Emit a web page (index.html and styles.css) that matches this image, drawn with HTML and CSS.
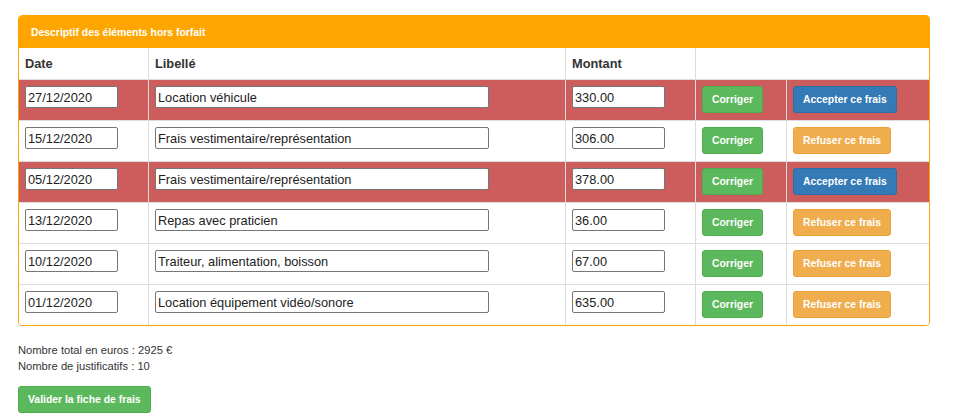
FILE: index.html
```html
<!DOCTYPE html>
<html lang="fr">
<head>
<meta charset="utf-8">
<title>Fiche de frais</title>
<link rel="stylesheet" href="styles.css">
</head>
<body>
<div class="panel">
  <div class="panel-heading">Descriptif des éléments hors forfait</div>
  <div class="grid">
    <div class="row head">
      <div class="cell">Date</div>
      <div class="cell">Libellé</div>
      <div class="cell">Montant</div>
      <div class="cell span2"></div>
    </div>
    <div class="row danger">
      <div class="cell"><input class="in-date" value="27/12/2020"></div>
      <div class="cell"><input class="in-lib" value="Location véhicule"></div>
      <div class="cell"><input class="in-mnt" value="330.00"></div>
      <div class="cell"><button class="btn success">Corriger</button></div>
      <div class="cell"><button class="btn primary">Accepter ce frais</button></div>
    </div>
    <div class="row">
      <div class="cell"><input class="in-date" value="15/12/2020"></div>
      <div class="cell"><input class="in-lib" value="Frais vestimentaire/représentation"></div>
      <div class="cell"><input class="in-mnt" value="306.00"></div>
      <div class="cell"><button class="btn success">Corriger</button></div>
      <div class="cell"><button class="btn warning">Refuser ce frais</button></div>
    </div>
    <div class="row danger">
      <div class="cell"><input class="in-date" value="05/12/2020"></div>
      <div class="cell"><input class="in-lib" value="Frais vestimentaire/représentation"></div>
      <div class="cell"><input class="in-mnt" value="378.00"></div>
      <div class="cell"><button class="btn success">Corriger</button></div>
      <div class="cell"><button class="btn primary">Accepter ce frais</button></div>
    </div>
    <div class="row">
      <div class="cell"><input class="in-date" value="13/12/2020"></div>
      <div class="cell"><input class="in-lib" value="Repas avec praticien"></div>
      <div class="cell"><input class="in-mnt" value="36.00"></div>
      <div class="cell"><button class="btn success">Corriger</button></div>
      <div class="cell"><button class="btn warning">Refuser ce frais</button></div>
    </div>
    <div class="row">
      <div class="cell"><input class="in-date" value="10/12/2020"></div>
      <div class="cell"><input class="in-lib" value="Traiteur, alimentation, boisson"></div>
      <div class="cell"><input class="in-mnt" value="67.00"></div>
      <div class="cell"><button class="btn success">Corriger</button></div>
      <div class="cell"><button class="btn warning">Refuser ce frais</button></div>
    </div>
    <div class="row">
      <div class="cell"><input class="in-date" value="01/12/2020"></div>
      <div class="cell"><input class="in-lib" value="Location équipement vidéo/sonore"></div>
      <div class="cell"><input class="in-mnt" value="635.00"></div>
      <div class="cell"><button class="btn success">Corriger</button></div>
      <div class="cell"><button class="btn warning">Refuser ce frais</button></div>
    </div>
  </div>
</div>
<div class="totals">
  <p>Nombre total en euros : 2925 €</p>
  <p>Nombre de justificatifs : 10</p>
</div>
<button class="btn success valider">Valider la fiche de frais</button>
</body>
</html>
```

FILE: styles.css
```css
* { box-sizing: border-box; }
html, body { margin: 0; background: #fff; }
body {
  padding: 15px 0 0 18px;
  font-family: "Liberation Sans", Arial, sans-serif;
  font-size: 11.2px;
  color: #333;
}
.panel {
  width: 912px;
  border: 1px solid #ffa500;
  border-radius: 4px;
  overflow: hidden;
  margin-bottom: 16px;
}
.panel-heading {
  background: #ffa500;
  color: #fff;
  font-weight: bold;
  font-size: 10.4px;
  height: 32px;
  padding: 2px 12px 0;
  line-height: 30px;
}
.row {
  display: grid;
  grid-template-columns: 129px 417px 130px 91px 143px;
  height: 41px;
  border-top: 1px solid #ddd;
  background: #fff;
}
.row.head {
  height: 31px;
  border-top: 0;
}
.row.danger { background: #cd5c5c; }
.cell {
  border-left: 1px solid #ddd;
  padding: 6px 6px 7px;
}
.cell:first-child { border-left: 0; }
.cell.span2 { grid-column: span 2; }
.head .cell {
  padding: 0 6px;
  font-weight: bold;
  font-size: 12.8px;
  line-height: 31px;
}
input {
  display: block;
  height: 22px;
  margin: 0;
  padding: 0 2px;
  border: 1px solid #767676;
  border-radius: 2px;
  background: #fff;
  font-family: "Liberation Sans", Arial, sans-serif;
  font-size: 12.8px;
  color: #222;
}
.in-date, .in-mnt { width: 93px; }
.in-lib { width: 334px; }
.btn {
  display: block;
  height: 27px;
  margin: 0;
  padding: 1px 9px 0;
  border: 1px solid transparent;
  border-radius: 3px;
  font-family: "Liberation Sans", Arial, sans-serif;
  font-weight: bold;
  font-size: 10.4px;
  line-height: 24px;
  color: #fff;
  white-space: nowrap;
}
.btn.success { background: #5cb85c; border-color: #4cae4c; }
.btn.primary { background: #337ab7; border-color: #2e6da4; }
.btn.warning { background: #f0ad4e; border-color: #eea236; }
.totals p {
  margin: 0;
  line-height: 16px;
}
.valider { margin-top: 12px; }
```
